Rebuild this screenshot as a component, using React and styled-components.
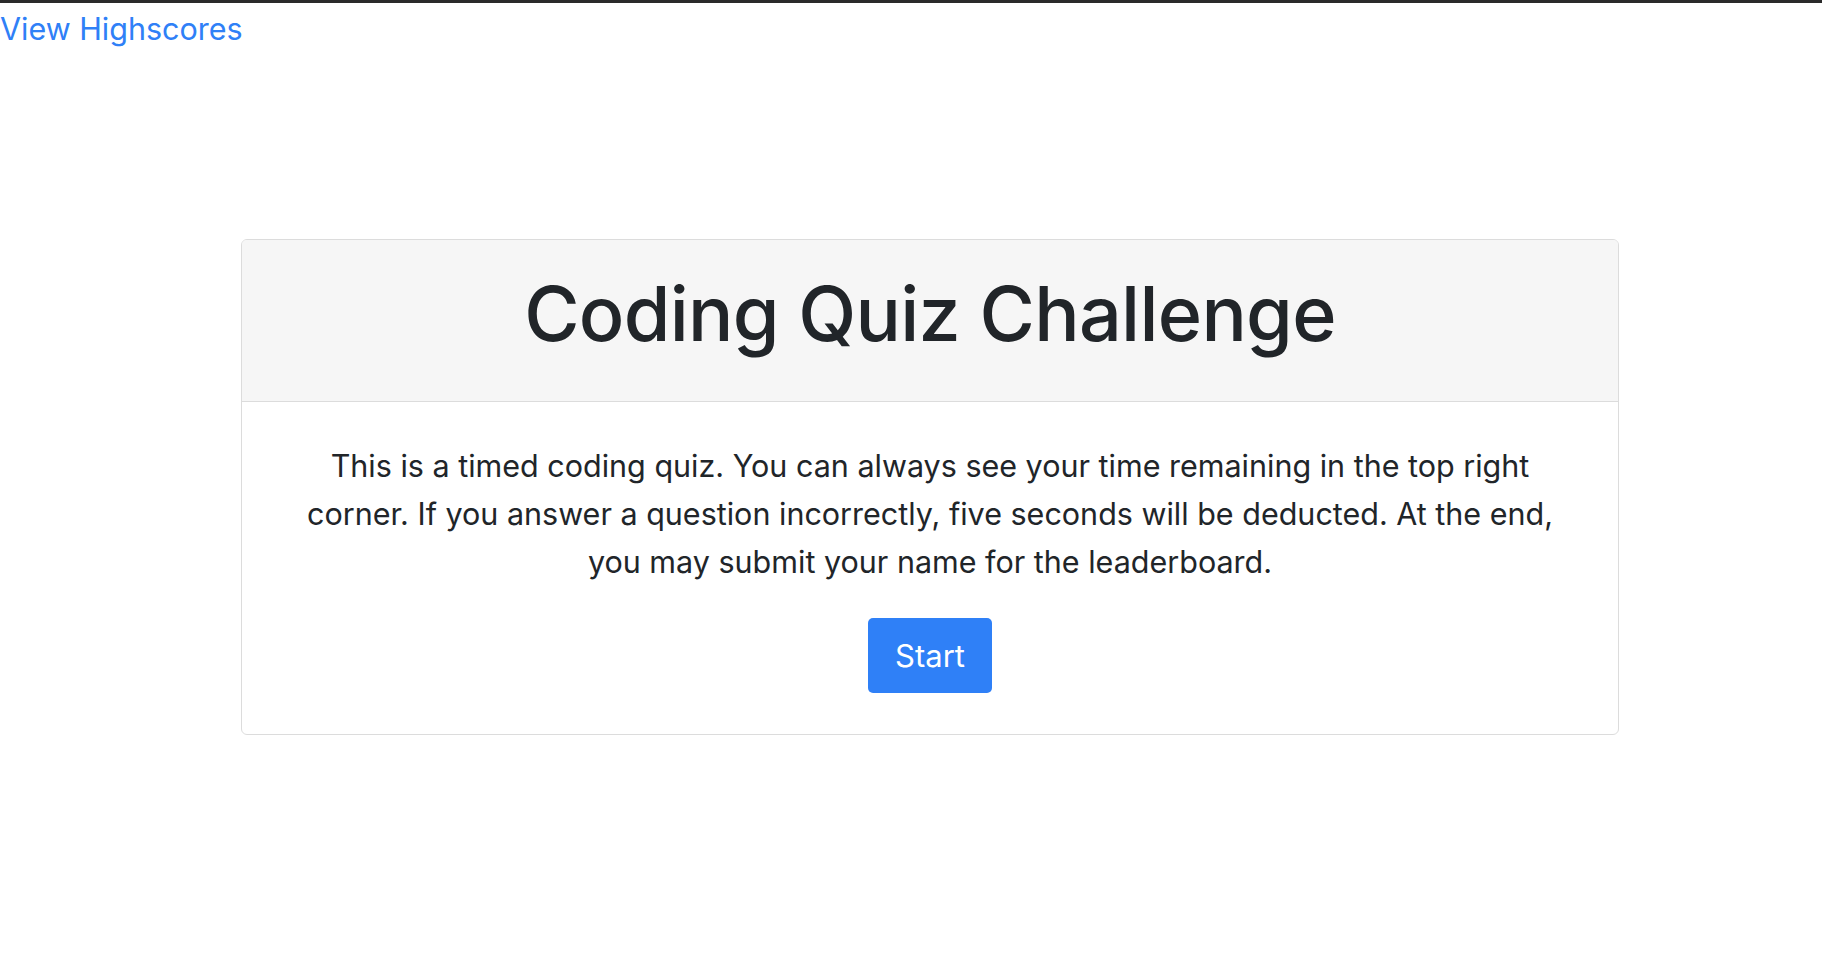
import React from 'react';
import styled, { createGlobalStyle } from 'styled-components';

const GlobalStyle = createGlobalStyle`
  html, body {
    margin: 0;
    padding: 0;
    background: #fff;
  }
  body {
    font-family: Inter, "Noto Sans", "Liberation Sans", sans-serif;
    color: #212529;
    border-top: 3px solid #2a2a2a;
  }
`;

const Nav = styled.nav`
  display: flex;
  align-items: center;
  height: 52px;
`;

const HighscoresLink = styled.a`
  font-size: 30.5px;
  line-height: 1.2;
  color: #2f80f7;
  text-decoration: none;
  cursor: pointer;
`;

const Main = styled.main`
  padding: 184px 0 0 241px;
`;

const Card = styled.section`
  width: 1378px;
  box-sizing: border-box;
  border: 1px solid #dcdcdc;
  border-radius: 6px;
  overflow: hidden;
`;

const CardHeader = styled.header`
  box-sizing: border-box;
  height: 162px;
  background: #f6f6f6;
  border-bottom: 1px solid #dcdcdc;
  display: flex;
  align-items: center;
  justify-content: center;
  padding-bottom: 12px;
`;

const Title = styled.h1`
  margin: 0;
  font-size: 75.5px;
  font-weight: 500;
  line-height: 1.2;
  letter-spacing: -0.7px;
`;

const CardBody = styled.div`
  padding: 40px 50px 41px;
  display: flex;
  flex-direction: column;
  align-items: center;
  text-align: center;
`;

const Intro = styled.p`
  margin: 0 0 32px;
  font-size: 30.5px;
  line-height: 48px;
`;

const StartButton = styled.button`
  width: 124px;
  height: 75px;
  border: none;
  border-radius: 5px;
  background: #2f80f7;
  color: #fff;
  font-family: inherit;
  font-size: 31px;
  cursor: pointer;
`;

export default function App() {
  return (
    <>
      <GlobalStyle />
      <Nav>
        <HighscoresLink>View Highscores</HighscoresLink>
      </Nav>
      <Main>
        <Card>
          <CardHeader>
            <Title>Coding Quiz Challenge</Title>
          </CardHeader>
          <CardBody>
            <Intro>
              This is a timed coding quiz. You can always see your time remaining in the top right
              corner. If you answer a question incorrectly, five seconds will be deducted. At the
              end, you may submit your name for the leaderboard.
            </Intro>
            <StartButton type="button">Start</StartButton>
          </CardBody>
        </Card>
      </Main>
    </>
  );
}
